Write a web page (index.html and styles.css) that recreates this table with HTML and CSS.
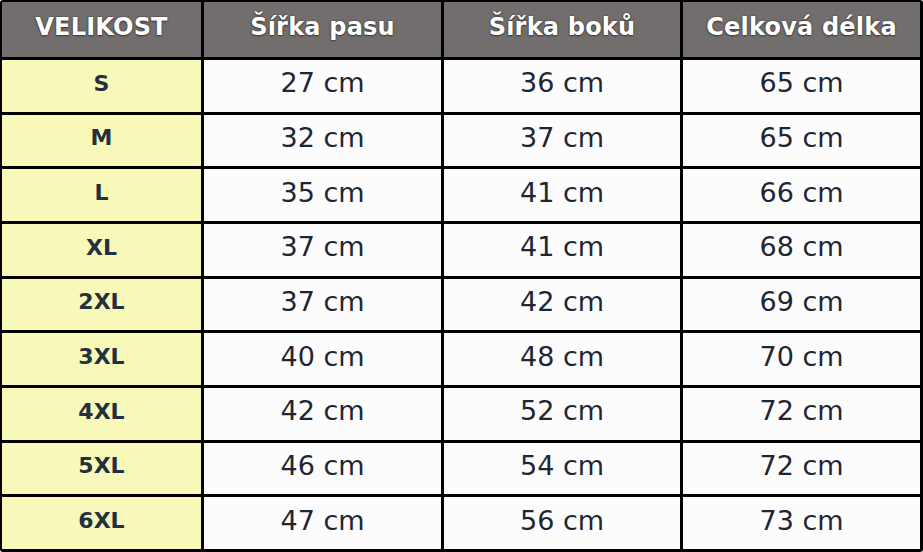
FILE: index.html
```html
<!DOCTYPE html>
<html lang="cs">
<head>
<meta charset="utf-8">
<title>Velikostní tabulka</title>
<link rel="stylesheet" href="styles.css">
</head>
<body>
<div class="chart">
  <div class="cell head">VELIKOST</div>
  <div class="cell head">Šířka pasu</div>
  <div class="cell head">Šířka boků</div>
  <div class="cell head">Celková délka</div>

  <div class="cell size">S</div><div class="cell val">27 cm</div><div class="cell val">36 cm</div><div class="cell val">65 cm</div>
  <div class="cell size">M</div><div class="cell val">32 cm</div><div class="cell val">37 cm</div><div class="cell val">65 cm</div>
  <div class="cell size">L</div><div class="cell val">35 cm</div><div class="cell val">41 cm</div><div class="cell val">66 cm</div>
  <div class="cell size">XL</div><div class="cell val">37 cm</div><div class="cell val">41 cm</div><div class="cell val">68 cm</div>
  <div class="cell size">2XL</div><div class="cell val">37 cm</div><div class="cell val">42 cm</div><div class="cell val">69 cm</div>
  <div class="cell size">3XL</div><div class="cell val">40 cm</div><div class="cell val">48 cm</div><div class="cell val">70 cm</div>
  <div class="cell size">4XL</div><div class="cell val">42 cm</div><div class="cell val">52 cm</div><div class="cell val">72 cm</div>
  <div class="cell size">5XL</div><div class="cell val">46 cm</div><div class="cell val">54 cm</div><div class="cell val">72 cm</div>
  <div class="cell size">6XL</div><div class="cell val">47 cm</div><div class="cell val">56 cm</div><div class="cell val">73 cm</div>
</div>
</body>
</html>
```

FILE: styles.css
```css
html, body {
  margin: 0;
  padding: 0;
  background: #ffffff;
}

.chart {
  box-sizing: border-box;
  width: 923px;
  height: 552px;
  display: grid;
  grid-template-columns: 199px 237px 236px 237px;
  grid-template-rows: 55px repeat(9, 1fr);
  gap: 3px;
  padding: 2px 3px 3px 2px;
  background: #000000;
  border-radius: 3px;
  font-family: "DejaVu Sans", sans-serif;
}

.cell {
  display: flex;
  align-items: center;
  justify-content: center;
}

.head {
  background: #726e6d;
  color: #ffffff;
  font-weight: bold;
  font-size: 24px;
  letter-spacing: 0.2px;
  text-shadow: 0 0 2px rgba(0, 0, 0, 0.55), 0 1px 2px rgba(0, 0, 0, 0.4);
  padding-bottom: 6px;
}

.size {
  background: #f8f8b9;
  color: #243040;
  font-weight: bold;
  font-size: 22px;
  padding-bottom: 5px;
}

.val {
  background: #fdfcfd;
  color: #1f2633;
  font-size: 27px;
  padding-bottom: 6px;
}
```
